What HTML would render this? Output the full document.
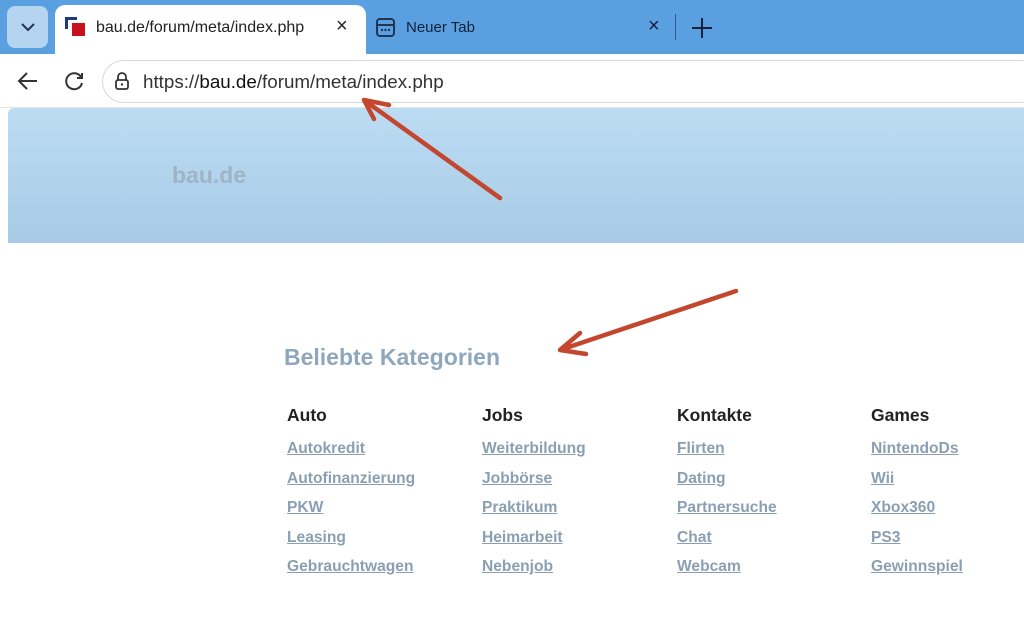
<!DOCTYPE html>
<html><head><meta charset="utf-8"><style>
*{margin:0;padding:0;box-sizing:border-box}
body{width:1024px;height:619px;overflow:hidden;background:#fff;font-family:"Liberation Sans",sans-serif;position:relative}
.abs{position:absolute}
.tabbar{left:0;top:0;width:1024px;height:54px;background:#5a9fdf}
.btn{left:7px;top:6px;width:41px;height:42px;background:#b5d4f0;border-radius:8px}
.tab{left:55px;top:5px;width:311px;height:50px;background:#fff;border-radius:10px 10px 0 0}
.t{font-size:15px;color:#222}
.toolbar{left:0;top:54px;width:1024px;height:54px;background:#fff;border-bottom:1px solid #e4e6e0}
.url{left:102px;top:60px;width:940px;height:43px;border:1px solid #d8d8d8;border-radius:22px;background:#fff}
.hdr{left:8px;top:108px;width:1016px;height:135px;background:linear-gradient(#bcdcf3,#a7cbe6);border-radius:6px 0 0 0}
h2{position:absolute;left:284px;top:344px;font-size:23px;color:#8fa7bc;font-weight:bold}
.col{position:absolute;top:405px}
.col b{display:block;font-size:17.5px;color:#222;height:35px}
.col a{display:block;font-size:15.6px;font-weight:bold;color:#8a9fb2;text-decoration:underline;height:29.5px}
</style></head><body>
<div class="abs tabbar"></div>
<div class="abs btn"></div>
<svg class="abs" style="left:19px;top:19px" width="18" height="16"><path d="M3 5l6 6 6-6" stroke="#1f3552" stroke-width="2" fill="none"/></svg>
<div class="abs tab"></div>
<div class="abs" style="left:65px;top:17px;width:12px;height:12px;border:3px solid #1e3a78;border-right:none;border-bottom:none"></div>
<div class="abs" style="left:72px;top:23px;width:13px;height:13px;background:#c8101e"></div>
<div class="abs t" style="left:96px;top:19px;font-size:16px">bau.de/forum/meta/index.php</div>
<div class="abs" style="left:336px;top:15px;font-size:20px;color:#222">×</div>
<svg class="abs" style="left:375px;top:17px" width="22" height="22"><rect x="2" y="2" width="17" height="17" rx="3" stroke="#1f3552" stroke-width="2" fill="none"/><line x1="2" y1="8" x2="19" y2="8" stroke="#1f3552" stroke-width="2"/><circle cx="7" cy="13" r="1.2" fill="#1f3552"/><circle cx="10.5" cy="13" r="1.2" fill="#1f3552"/><circle cx="14" cy="13" r="1.2" fill="#1f3552"/></svg>
<div class="abs t" style="left:406px;top:19px;color:#14213a">Neuer Tab</div>
<div class="abs" style="left:648px;top:15px;font-size:20px;color:#14213a">×</div>
<div class="abs" style="left:675px;top:14px;width:1px;height:26px;background:#2f5a8a"></div>
<svg class="abs" style="left:690px;top:16px" width="24" height="24"><path d="M12 2v20M2 12h20" stroke="#14213a" stroke-width="2"/></svg>
<div class="abs toolbar"></div>
<svg class="abs" style="left:15px;top:70px" width="26" height="22"><path d="M22 11H4M12 3l-8 8 8 8" stroke="#333" stroke-width="2" fill="none"/></svg>
<svg class="abs" style="left:63px;top:70px" width="24" height="22"><path d="M18 7A8 8 0 1 0 19 13M19 3v5h-5" stroke="#333" stroke-width="2" fill="none"/></svg>
<div class="abs url"></div>
<svg class="abs" style="left:112px;top:71px" width="20" height="20"><path d="M6 9V6a4 4 0 0 1 8 0v3" stroke="#333" stroke-width="1.8" fill="none"/><rect x="4" y="9" width="12" height="9" rx="2" stroke="#333" stroke-width="1.8" fill="none"/><circle cx="10" cy="13.5" r="1.2" fill="#333"/></svg>
<div class="abs" style="left:143px;top:71px;font-size:18.8px;color:#333">https://<span style="color:#111">bau.de</span>/forum/meta/index.php</div>
<div class="abs hdr"></div>
<div class="abs" style="left:172px;top:162px;font-size:23px;font-weight:bold;color:#9fb4c7">bau.de</div>
<h2>Beliebte Kategorien</h2>
<div class="col" style="left:287px"><b>Auto</b><a>Autokredit</a><a>Autofinanzierung</a><a>PKW</a><a>Leasing</a><a>Gebrauchtwagen</a></div>
<div class="col" style="left:482px"><b>Jobs</b><a>Weiterbildung</a><a>Jobbörse</a><a>Praktikum</a><a>Heimarbeit</a><a>Nebenjob</a></div>
<div class="col" style="left:677px"><b>Kontakte</b><a>Flirten</a><a>Dating</a><a>Partnersuche</a><a>Chat</a><a>Webcam</a></div>
<div class="col" style="left:871px"><b>Games</b><a>NintendoDs</a><a>Wii</a><a>Xbox360</a><a>PS3</a><a>Gewinnspiel</a></div>
<svg class="abs" style="left:0;top:0" width="1024" height="619"><g stroke="#c3472f" stroke-width="4.5" stroke-linecap="round" fill="none"><path d="M500 198L364 100M364 100l10 19M364 100l25 5"/><path d="M736 291L560 350M560 350l20-17M560 350l26 4"/></g></svg>
</body></html>
